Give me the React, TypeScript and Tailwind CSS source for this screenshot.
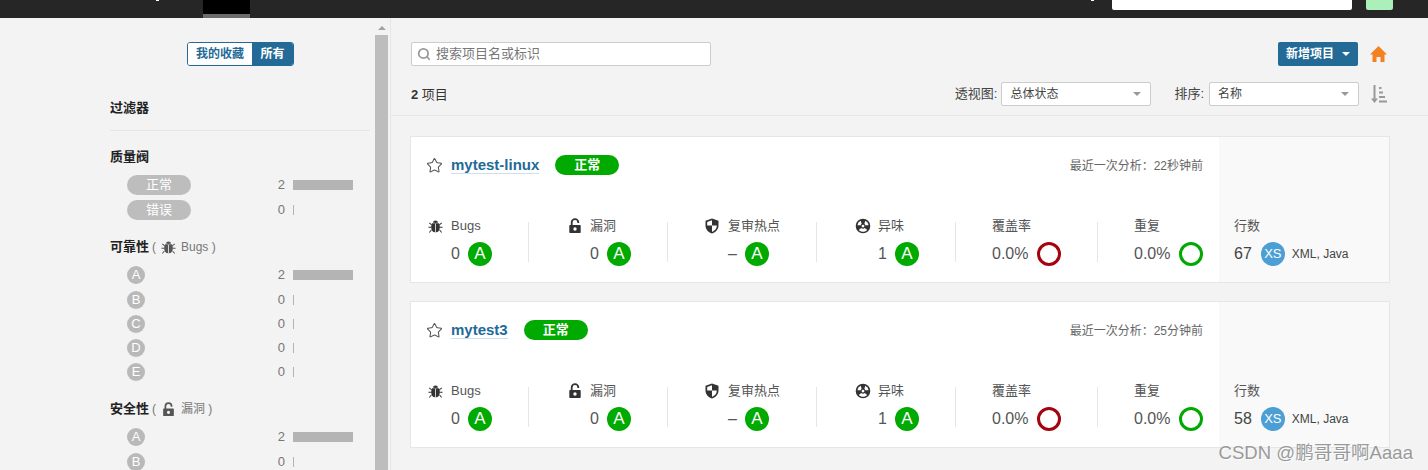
import { Search, Star } from "lucide-react";

const font = { fontFamily: '"Liberation Sans", "Noto Sans CJK SC", sans-serif' };

const BugIcon = ({ size = 16 }: { size?: number }) => (
  <svg width={size} height={size} viewBox="0 0 16 16" fill="currentColor" aria-hidden="true">
    <path d="M5.2 3.6C5.5 2.3 6.6 1.5 8 1.5s2.5.8 2.8 2.1L8 4.3z" />
    <path d="M4.4 4.5h7.2c.6.9 1 2.4 1 4.2 0 3.300-1.700 5.300-4.200 5.300h-.8C5.100 14 3.400 12 3.400 8.700c0-1.800.4-3.300 1-4.200z" />
    <rect x="7.6" y="5" width="0.8" height="9" fill="#fff" />
    <path d="M1 4.500l.7-.7 2.500 2-.6.800zM15 4.500l-.7-.7-2.500 2 .6.800zM.5 8.300h3v1h-3zM12.500 8.300h3v1h-3zM3.400 11.200l.6.800L1.800 14.700l-.8-.6zM12.600 11.200l-.6.800 2.200 2.700.8-.6z" />
  </svg>
);

const LockIcon = ({ size = 16 }: { size?: number }) => (
  <svg width={size} height={size} viewBox="0 0 16 16" aria-hidden="true">
    <path
      fill="currentColor"
      fillRule="evenodd"
      d="M3 7h10a.7.7 0 0 1 .7.7v6.600a.7.7 0 0 1-.7.7H3a.7.7 0 0 1-.7-.7V7.700A.7.7 0 0 1 3 7zm5 2.300a1.700 1.700 0 1 0 0 3.400 1.700 1.700 0 0 0 0-3.400z"
    />
    <path d="M4.700 7.500V4.500a3.300 3.300 0 0 1 6.600 0v.6" fill="none" stroke="currentColor" strokeWidth="1.800" />
  </svg>
);

const ShieldIcon = () => (
  <svg width="14" height="16" viewBox="0 0 14 16" fill="currentColor" aria-hidden="true">
    <path
      fillRule="evenodd"
      d="M7 .5l6.500 2.200v4.800c0 3.800-2.700 6.700-6.500 8-3.800-1.300-6.500-4.200-6.500-8V2.700zM7 2.300L2.200 3.900v3.600H7zM7 7.500v6.400c2.800-1.100 4.800-3.300 4.800-6.400z"
    />
  </svg>
);

const SmellIcon = () => (
  <svg width="16" height="16" viewBox="0 0 16 16" fill="currentColor" aria-hidden="true">
    <path
      fillRule="evenodd"
      d="M8 .7a7.300 7.300 0 1 1 0 14.600A7.300 7.300 0 0 1 8 .7zM8 6.700a1.400 1.400 0 1 0 0 2.800 1.400 1.400 0 0 0 0-2.800zM5.700 2.800A5.700 5.700 0 0 0 2.400 7.300h3.300c.1-.6.400-1.100.9-1.500zM10.300 2.800L9.400 5.800c.5.400.8.900.9 1.500h3.300a5.700 5.700 0 0 0-3.300-4.500zM6.200 10L3.800 12c1 1.100 2.500 1.800 4.200 1.800s3.200-.7 4.200-1.800L9.800 10c-.5.400-1.100.7-1.800.7s-1.300-.3-1.800-.7z"
    />
  </svg>
);

const HomeIcon = () => (
  <svg width="17" height="16" viewBox="0 0 17 16" fill="#f4801f" aria-hidden="true">
    <path d="M8.500 0L17 8.500h-2.500V16h-4v-5h-4v5h-4V8.500H0z" />
  </svg>
);

const SortIcon = () => (
  <svg width="16" height="18" viewBox="0 0 16 18" fill="#999999" aria-hidden="true">
    <path d="M2.500 0h2v13.500H7L3.500 18 0 13.500h2.500z" />
    <rect x="8" y="2" width="2.500" height="2" />
    <rect x="8" y="6.500" width="4" height="2" />
    <rect x="8" y="11" width="6" height="2" />
    <rect x="8" y="15.500" width="8" height="2" />
  </svg>
);

const Caret = ({ className }: { className: string }) => (
  <span className={`h-0 w-0 border-x-[4px] border-t-[4px] border-x-transparent ${className}`} />
);

const Row = ({ count, first, children }: { count: number; first?: boolean; children: React.ReactNode }) => (
  <div className={`flex h-6 items-center pl-[17px] pr-[17px] ${first ? "mb-px" : ""}`}>
    {children}
    <span className="ml-auto text-[13px] text-[#777]">{count}</span>
    <span className="ml-[8px] flex w-[60px]">
      <span className={`h-[10px] bg-[#b4b4b4] ${count > 0 ? "w-full" : "w-px"}`} />
    </span>
  </div>
);

const GatePill = ({ label }: { label: string }) => (
  <span className="flex h-5 w-16 items-center justify-center rounded-full bg-[#bdbdbd] text-[13px] text-white">
    {label}
  </span>
);

const RatingDot = ({ label }: { label: string }) => (
  <span className="flex h-[18px] w-[18px] items-center justify-center rounded-full bg-[#b9b9b9] text-[13px] text-white">
    {label}
  </span>
);

const ratingCounts = [
  { label: "A", count: 2 },
  { label: "B", count: 0 },
  { label: "C", count: 0 },
  { label: "D", count: 0 },
  { label: "E", count: 0 },
];

const Sidebar = () => (
  <aside className="h-full w-[375px] shrink-0 overflow-hidden pl-[110px] pr-[5px] pt-6">
    <div className="flex justify-center">
      <div className="ml-px flex h-6 overflow-hidden rounded-[3px] border border-[#236a97] text-[12px] font-bold">
        <span className="flex w-[64px] items-center justify-center bg-white text-[#236a97]">我的收藏</span>
        <span className="flex w-[41px] items-center justify-center bg-[#236a97] text-white">所有</span>
      </div>
    </div>

    <h3 className="mt-8 h-5 text-[13px] font-bold leading-5 text-[#222]">过滤器</h3>
    <div className="mt-3 h-px bg-[#e6e6e6]" />

    <h3 className="mt-4 h-5 text-[13px] font-bold leading-5 text-[#222]">质量阀</h3>
    <div className="mt-[6px]">
      <Row count={2} first>
        <GatePill label="正常" />
      </Row>
      <Row count={0}>
        <GatePill label="错误" />
      </Row>
    </div>

    <h3 className="mt-[15px] flex h-5 items-center text-[13px] font-bold leading-5 text-[#222]">
      可靠性
      <span className="ml-[3px] flex items-center gap-[5px] text-[12px] font-normal text-[#777]">
        (
        <span className="text-[#555]">
          <BugIcon size={15} />
        </span>
        Bugs )
      </span>
    </h3>
    <div className="mt-[6px]">
      {ratingCounts.map((r, i) => (
        <Row key={r.label} count={r.count} first={i === 0}>
          <RatingDot label={r.label} />
        </Row>
      ))}
    </div>

    <h3 className="mt-[15px] flex h-5 items-center text-[13px] font-bold leading-5 text-[#222]">
      安全性
      <span className="ml-[3px] flex items-center gap-[5px] text-[12px] font-normal text-[#777]">
        (
        <span className="text-[#555]">
          <LockIcon size={15} />
        </span>
        漏洞 )
      </span>
    </h3>
    <div className="mt-[6px]">
      {ratingCounts.slice(0, 2).map((r, i) => (
        <Row key={r.label} count={r.count} first={i === 0}>
          <RatingDot label={r.label} />
        </Row>
      ))}
    </div>
  </aside>
);

const Scrollbar = () => (
  <div className="flex h-full w-[15px] shrink-0 flex-col">
    <div className="flex h-[17px] w-[13px] items-center justify-center pt-[2px]">
      <span className="h-0 w-0 border-x-[4px] border-b-[4px] border-x-transparent border-b-[#a3a3a3]" />
    </div>
    <div className="w-[13px] flex-1 bg-[#bdbdbd]" />
  </div>
);

const RatingA = () => (
  <span className="flex h-6 w-6 shrink-0 items-center justify-center rounded-full bg-[#00aa00] text-[17px] text-white">
    A
  </span>
);

const Metric = ({
  icon,
  label,
  value,
  inner,
  width,
  ring,
  last,
}: {
  icon?: React.ReactNode;
  label: string;
  value: string;
  inner: string;
  width: string;
  ring?: string;
  last?: boolean;
}) => (
  <div className={`flex shrink-0 items-center justify-end ${width}`}>
    <div className={`flex flex-col ${inner}`}>
      <div className="flex h-4 items-center whitespace-nowrap text-[13px] leading-4 text-[#555]">
        {icon && <span className="absolute -ml-[23px] flex text-[#333]">{icon}</span>}
        {label}
      </div>
      <div className="mt-2 flex h-6 items-center justify-between text-[16px] text-[#555]">
        <span>{value}</span>
        {ring ? <span className={`h-6 w-6 rounded-full border-[3px] ${ring}`} /> : <RatingA />}
      </div>
    </div>
    {!last && <div className="ml-9 h-10 w-px bg-[#e6e6e6]" />}
  </div>
);

const ProjectCard = ({ name, analysed, lines }: { name: string; analysed: string; lines: number }) => (
  <article className="flex h-[147px] border border-[#e6e6e6] bg-white">
    <div className="flex-1">
      <div className="mt-[18px] flex h-5 items-center pl-4 pr-4">
        <Star size={17} strokeWidth={1.5} className="-ml-px mr-2 text-[#555]" />
        <span className="border-b border-[#cfe0ec] text-[15px] font-bold leading-[17px] text-[#236a97]">{name}</span>
        <span className="ml-4 flex h-5 w-16 items-center justify-center rounded-full bg-[#00aa00] text-[13px] font-bold text-white">
          正常
        </span>
        <span className="ml-auto pt-px text-[12px] text-[#666]">最近一次分析：{analysed}</span>
      </div>
      <div className="mt-[43px] flex">
        <Metric icon={<BugIcon size={15} />} label="Bugs" value="0" inner="w-[41px]" width="w-[118px]" />
        <Metric icon={<LockIcon />} label="漏洞" value="0" inner="w-[41px]" width="w-[139px]" />
        <Metric icon={<ShieldIcon />} label="复审热点" value="–" inner="mr-[11px] w-[41px]" width="w-[149px]" />
        <Metric icon={<SmellIcon />} label="异味" value="1" inner="w-[41px]" width="w-[139px]" />
        <Metric label="覆盖率" value="0.0%" ring="border-[#a4030f]" inner="w-[69px]" width="w-[142px]" />
        <Metric label="重复" value="0.0%" ring="border-[#00aa00]" inner="w-[69px]" width="w-[105px]" last />
      </div>
    </div>
    <div className="w-[170px] shrink-0 bg-[#f9f9f9] pl-[15px] pt-[81px]">
      <div className="h-4 text-[13px] leading-4 text-[#555]">行数</div>
      <div className="mt-2 flex h-6 items-center">
        <span className="text-[16px] text-[#444]">{lines}</span>
        <span className="ml-[9px] flex h-6 w-6 items-center justify-center rounded-full bg-[#4b9fd5] text-[13px] text-white">
          XS
        </span>
        <span className="ml-[7px] text-[12px] text-[#444]">XML, Java</span>
      </div>
    </div>
  </article>
);

const Select = ({ value, width }: { value: string; width: string }) => (
  <div className={`flex h-6 items-center justify-between rounded-[2px] border border-[#cdcdcd] bg-white pl-2 pr-[9px] text-[12px] text-[#444] ${width}`}>
    {value}
    <Caret className="border-t-[#999]" />
  </div>
);

const Main = () => (
  <main className="h-full min-w-0 flex-1 border-l border-[#e6e6e6]">
    <div className="border-b border-[#e6e6e6] pb-[9px] pl-5 pr-[41px] pt-6">
      <div className="flex items-center">
        <div className="flex h-6 w-[300px] items-center rounded-[2px] border border-[#cdcdcd] bg-white pl-[5px] text-[13px] text-[#777]">
          <Search size={14} strokeWidth={3} className="mr-[5px] text-[#999]" />
          搜索项目名或标识
        </div>
        <button className="ml-auto flex h-6 w-20 items-center justify-center gap-2 rounded-[2px] bg-[#236a97] text-[12px] font-bold text-white">
          新增项目
          <Caret className="border-t-white" />
        </button>
        <span className="ml-3 flex">
          <HomeIcon />
        </span>
      </div>
      <div className="mt-4 flex items-center text-[13px] text-[#444]">
        <span className="pt-[2px] text-[#333]">
          <b>2</b> 项目
        </span>
        <span className="ml-auto mr-1">透视图:</span>
        <Select value="总体状态" width="w-[150px]" />
        <span className="ml-[23px] mr-[5px]">排序:</span>
        <Select value="名称" width="w-[150px]" />
        <span className="ml-3 flex">
          <SortIcon />
        </span>
      </div>
    </div>
    <div className="flex flex-col gap-[18px] pl-[19px] pr-[38px] pt-5">
      <ProjectCard name="mytest-linux" analysed="22秒钟前" lines={67} />
      <ProjectCard name="mytest3" analysed="25分钟前" lines={58} />
    </div>
  </main>
);

export default function App() {
  return (
    <div className="relative flex h-[470px] flex-col overflow-hidden bg-[#f3f3f3]" style={font}>
      <header className="flex h-[18px] shrink-0 items-start bg-[#262626]">
        <span className="ml-[156px] h-px w-[3px] bg-white" />
        <div className="ml-[44px] h-[18px] w-[47px] border-b-4 border-[#6b6b6b] bg-black" />
        <span className="ml-[841px] h-px w-[3px] bg-white" />
        <div className="ml-[18px] h-[10px] w-[240px] rounded-b-[2px] bg-white" />
        <div className="ml-[14px] h-[10px] w-[27px] rounded-b-[2px] bg-[#abf0bb]" />
      </header>
      <div className="flex min-h-0 flex-1">
        <Sidebar />
        <Scrollbar />
        <Main />
      </div>
      <span className="absolute bottom-[5px] right-[15px] text-[18.6px] leading-6 text-[#9a9a9a] [text-shadow:1px_1px_1px_#fff]">
        CSDN @鹏哥哥啊Aaaa
      </span>
    </div>
  );
}
